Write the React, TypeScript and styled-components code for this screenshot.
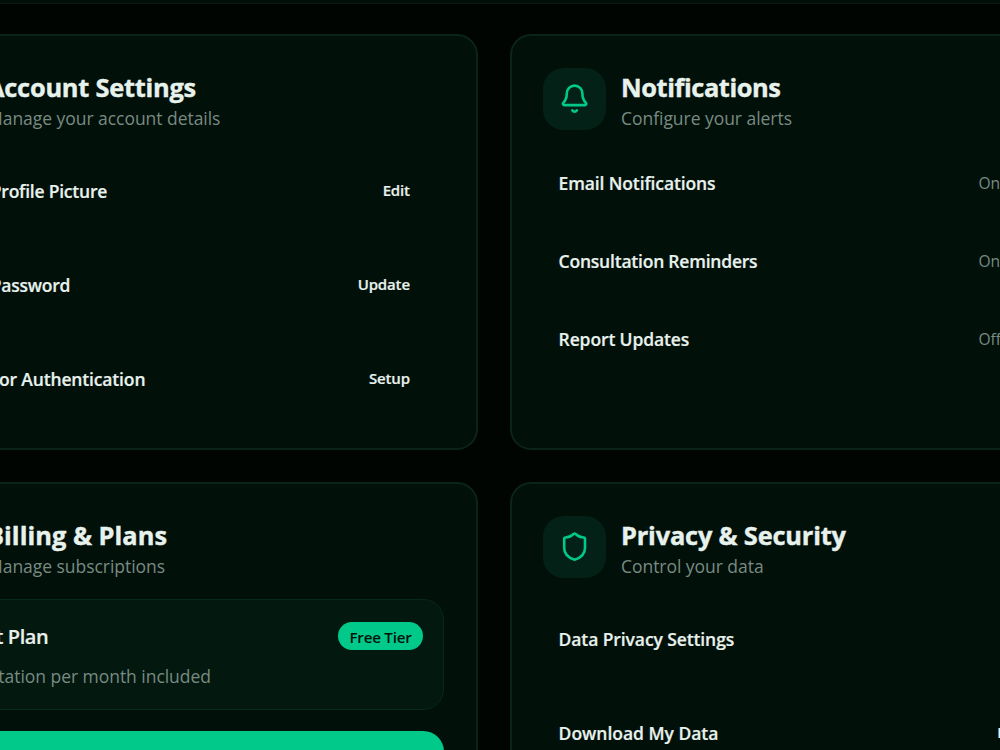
import React from 'react';
import styled, { createGlobalStyle } from 'styled-components';
import { Bell, Shield, User, CreditCard } from 'lucide-react';

const GlobalStyle = createGlobalStyle`
  * { box-sizing: border-box; }
  body {
    margin: 0;
    background: #000501;
    color: #e8f2ed;
    font-family: "Segoe UI", "Open Sans", "Noto Sans", sans-serif;
    overflow: hidden;
  }
`;

const Page = styled.div`
  width: 1000px;
  height: 750px;
  overflow: hidden;
`;

const TopBar = styled.header`
  height: 4px;
  background: #020f09;
  border-bottom: 1px solid #071a12;
`;

const Grid = styled.main`
  display: grid;
  grid-template-columns: 602px 602px;
  grid-auto-rows: 416px;
  gap: 32px;
  margin: 30px 0 0 -124px;
`;

const Card = styled.section`
  display: flex;
  flex-direction: column;
  gap: 21px;
  padding: 31.5px 32px 31.5px 31px;
  border: 2.6px solid #0b241a;
  border-radius: 21px;
  background: #02100a;
`;

const CardHeader = styled.div`
  display: flex;
  align-items: center;
  gap: 15px;
  height: 62.4px;
`;

const IconTile = styled.div`
  display: flex;
  align-items: center;
  justify-content: center;
  width: 63px;
  height: 62.4px;
  border-radius: 20.8px;
  background: #032117;
  color: #00c98a;
`;

const HeaderText = styled.div`
  padding-top: 6px;
`;

const Title = styled.h2<{ $track?: number }>`
  margin: 0;
  font-size: 25.4px;
  line-height: 32px;
  padding-bottom: 1px;
  font-weight: 700;
  -webkit-text-stroke: 0.4px currentColor;
  white-space: nowrap;
  letter-spacing: ${(p) => p.$track ?? 0}px;
`;

const Muted = styled.p`
  margin: 0;
  font-size: 17.5px;
  line-height: 29px;
  color: #788b82;
  white-space: nowrap;
  letter-spacing: -0.04px;
`;

const Rows = styled.div`
  display: flex;
  flex-direction: column;
  gap: 15.6px;
`;

const Row = styled.div<{ $compact?: boolean }>`
  display: flex;
  align-items: center;
  justify-content: space-between;
  height: ${(p) => (p.$compact ? 62.4 : 78.2)}px;
  padding: 1px 15.6px 0;
`;

const Label = styled.span<{ $track?: number }>`
  padding-top: 1px;
  font-size: 17.5px;
  line-height: 28px;
  font-weight: 600;
  -webkit-text-stroke: 0.2px currentColor;
  white-space: nowrap;
  letter-spacing: ${(p) => p.$track ?? -0.1}px;
`;

const PlanName = styled(Label)`
  font-size: 20px;
`;

const RowButton = styled.button`
  height: 46px;
  padding: 0 18.5px;
  border: 0;
  background: transparent;
  color: inherit;
  font: 600 15px/24px "Segoe UI", "Open Sans", "Noto Sans", sans-serif;
  -webkit-text-stroke: 0.2px currentColor;
  letter-spacing: -0.14px;
`;

const Status = styled.span`
  width: 84px;
  font-size: 15.6px;
  line-height: 24px;
  color: #788b82;
`;

const PlanBox = styled.div`
  flex: none;
  display: flex;
  flex-direction: column;
  gap: 11px;
  height: 111px;
  padding: 22px 20px 0 21px;
  border: 1px solid #06291c;
  border-radius: 20.8px;
  background: #03180f;
`;

const PlanTop = styled.div`
  display: flex;
  align-items: center;
  justify-content: space-between;
  height: 29px;
`;

const Badge = styled.span`
  display: flex;
  align-items: center;
  justify-content: center;
  width: 85px;
  height: 28px;
  padding-top: 1px;
  border-radius: 14px;
  background: #00c98a;
  color: #02100a;
  font-size: 15.2px;
  font-weight: 600;
  letter-spacing: -0.25px;
  white-space: nowrap;
`;

const UpgradeButton = styled.button`
  flex: none;
  height: 57px;
  border: 0;
  border-radius: 20.8px;
  background: #00c98a;
`;

type HeaderProps = {
  icon: React.ReactNode;
  title: string;
  subtitle: string;
  titleTrack: number;
};

const Header = ({ icon, title, subtitle, titleTrack }: HeaderProps) => (
  <CardHeader>
    <IconTile>{icon}</IconTile>
    <HeaderText>
      <Title $track={titleTrack}>{title}</Title>
      <Muted>{subtitle}</Muted>
    </HeaderText>
  </CardHeader>
);

const accountRows = [
  { label: 'Change Profile Picture', action: 'Edit', track: -0.23 },
  { label: 'Change Password', action: 'Update', track: -0.24 },
  { label: 'Two-Factor Authentication', action: 'Setup', track: -0.15 },
];

const alertRows = [
  { label: 'Email Notifications', status: 'On', track: -0.13 },
  { label: 'Consultation Reminders', status: 'On', track: -0.22 },
  { label: 'Report Updates', status: 'Off', track: -0.12 },
];

const privacyRows = [
  { label: 'Data Privacy Settings', action: '', track: -0.1 },
  { label: 'Download My Data', action: 'Export', track: -0.02 },
];

export default function App() {
  return (
    <Page>
      <GlobalStyle />
      <TopBar />
      <Grid>
        <Card>
          <Header
            icon={<User size={31.2} />}
            title="Account Settings"
            subtitle="Manage your account details"
            titleTrack={-0.24}
          />
          <Rows>
            {accountRows.map((r) => (
              <Row key={r.label}>
                <Label $track={r.track}>{r.label}</Label>
                <RowButton>{r.action}</RowButton>
              </Row>
            ))}
          </Rows>
        </Card>
        <Card>
          <Header
            icon={<Bell size={31.2} />}
            title="Notifications"
            subtitle="Configure your alerts"
            titleTrack={-0.41}
          />
          <Rows>
            {alertRows.map((r) => (
              <Row key={r.label} $compact>
                <Label $track={r.track}>{r.label}</Label>
                <Status>{r.status}</Status>
              </Row>
            ))}
          </Rows>
        </Card>
        <Card>
          <Header
            icon={<CreditCard size={31.2} />}
            title="Billing & Plans"
            subtitle="Manage subscriptions"
            titleTrack={0.03}
          />
          <PlanBox>
            <PlanTop>
              <PlanName $track={-0.4}>Current Plan</PlanName>
              <Badge>Free Tier</Badge>
            </PlanTop>
            <Muted>1 consultation per month included</Muted>
          </PlanBox>
          <UpgradeButton aria-label="Upgrade" />
        </Card>
        <Card>
          <Header
            icon={<Shield size={31.2} />}
            title="Privacy & Security"
            subtitle="Control your data"
            titleTrack={-0.19}
          />
          <Rows>
            {privacyRows.map((r) => (
              <Row key={r.label}>
                <Label $track={r.track}>{r.label}</Label>
                {r.action && <RowButton>{r.action}</RowButton>}
              </Row>
            ))}
          </Rows>
        </Card>
      </Grid>
    </Page>
  );
}
